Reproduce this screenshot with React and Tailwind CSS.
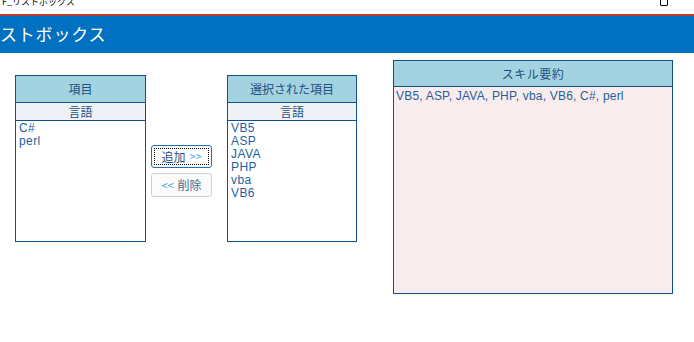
import React from 'react'

const jp = { fontFamily: '"Noto Sans CJK JP", "Liberation Sans", sans-serif' }
const latin = { fontFamily: '"Liberation Sans", "Noto Sans CJK JP", sans-serif' }

const ListPanel = ({ title, items, width }) => (
    <div className={`${width} h-[167px] border border-[#10508f] bg-white flex flex-col`}>
        <div className='h-[26px] bg-[#a3d3e0] flex items-center justify-center text-[12px] text-[#1f4f80]' style={jp}>
            {title}
        </div>
        <div className='h-[19px] bg-[#eef2f7] border-y border-[#10508f] flex items-center justify-center text-[12px] text-[#1f4f80]' style={jp}>
            言語
        </div>
        <div className='px-[3px] pt-[1px] text-[12px] leading-[13px] text-[#1f5fa0] tracking-[0.4px]' style={latin}>
            {items.map((item) => (
                <div key={item}>{item}</div>
            ))}
        </div>
    </div>
)

export default function App() {
    const selected = ['VB5', 'ASP', 'JAVA', 'PHP', 'vba', 'VB6']
    const remaining = ['C#', 'perl']

    return (
        <div className='w-[694px] h-[342px] bg-white overflow-hidden'>
            <div className='h-[16px] relative overflow-hidden border-b-2 border-[#c0392b]'>
                <div className='absolute left-[2px] top-[-4px] text-[9px] leading-[11px] text-black whitespace-nowrap' style={jp}>F_リストボックス</div>
                <div className='absolute left-[660px] top-[-3px] w-[8px] h-[9px] border border-black rounded-[1px]'></div>
            </div>
            <div className='h-[37px] bg-[#0070c0] flex items-center'>
                <span className='text-[17px] text-white tracking-[0.8px] -mt-[1px]' style={jp}>ストボックス</span>
            </div>

            <div className='flex items-start pl-[15px] pt-[22px]'>
                <ListPanel title='項目' items={remaining} width='w-[131px]' />

                <div className='flex flex-col gap-[5px] pt-[70px] ml-[5px] w-[61px]'>
                    <button className='h-[23px] rounded-[3px] border border-[#1e6fb5] bg-white flex items-center justify-center p-[2px]'>
                        <span className='w-full h-full border border-dotted border-black flex items-center justify-center gap-[4px] text-[12px]' style={jp}>
                            <span className='text-[#1f4f80]'>追加</span>
                            <span className='text-[#4aa3df] text-[11px]'>&gt;&gt;</span>
                        </span>
                    </button>
                    <button className='h-[24px] rounded-[3px] border border-[#cfcfcf] bg-[#fbfbfb] flex items-center justify-center gap-[4px] text-[12px]' style={jp}>
                        <span className='text-[#4aa3df] text-[11px]'>&lt;&lt;</span>
                        <span className='text-[#3a6f9a]'>削除</span>
                    </button>
                </div>

                <div className='ml-[15px]'>
                    <ListPanel title='選択された項目' items={selected} width='w-[130px]' />
                </div>

                <div className='ml-[36px] -mt-[15px] w-[280px] h-[234px] border border-[#10508f] bg-[#f8ecec] flex flex-col'>
                    <div className='h-[26px] bg-[#a3d3e0] border-b border-[#10508f] flex items-center justify-center text-[12px] text-[#1f4f80] tracking-[0.5px]' style={jp}>
                        スキル要約
                    </div>
                    <div className='px-[2px] pt-[2px] text-[12px] leading-[14px] text-[#1f5fa0] tracking-[0.2px]' style={latin}>
                        VB5, ASP, JAVA, PHP, vba, VB6, C#, perl
                    </div>
                </div>
            </div>
        </div>
    )
}
